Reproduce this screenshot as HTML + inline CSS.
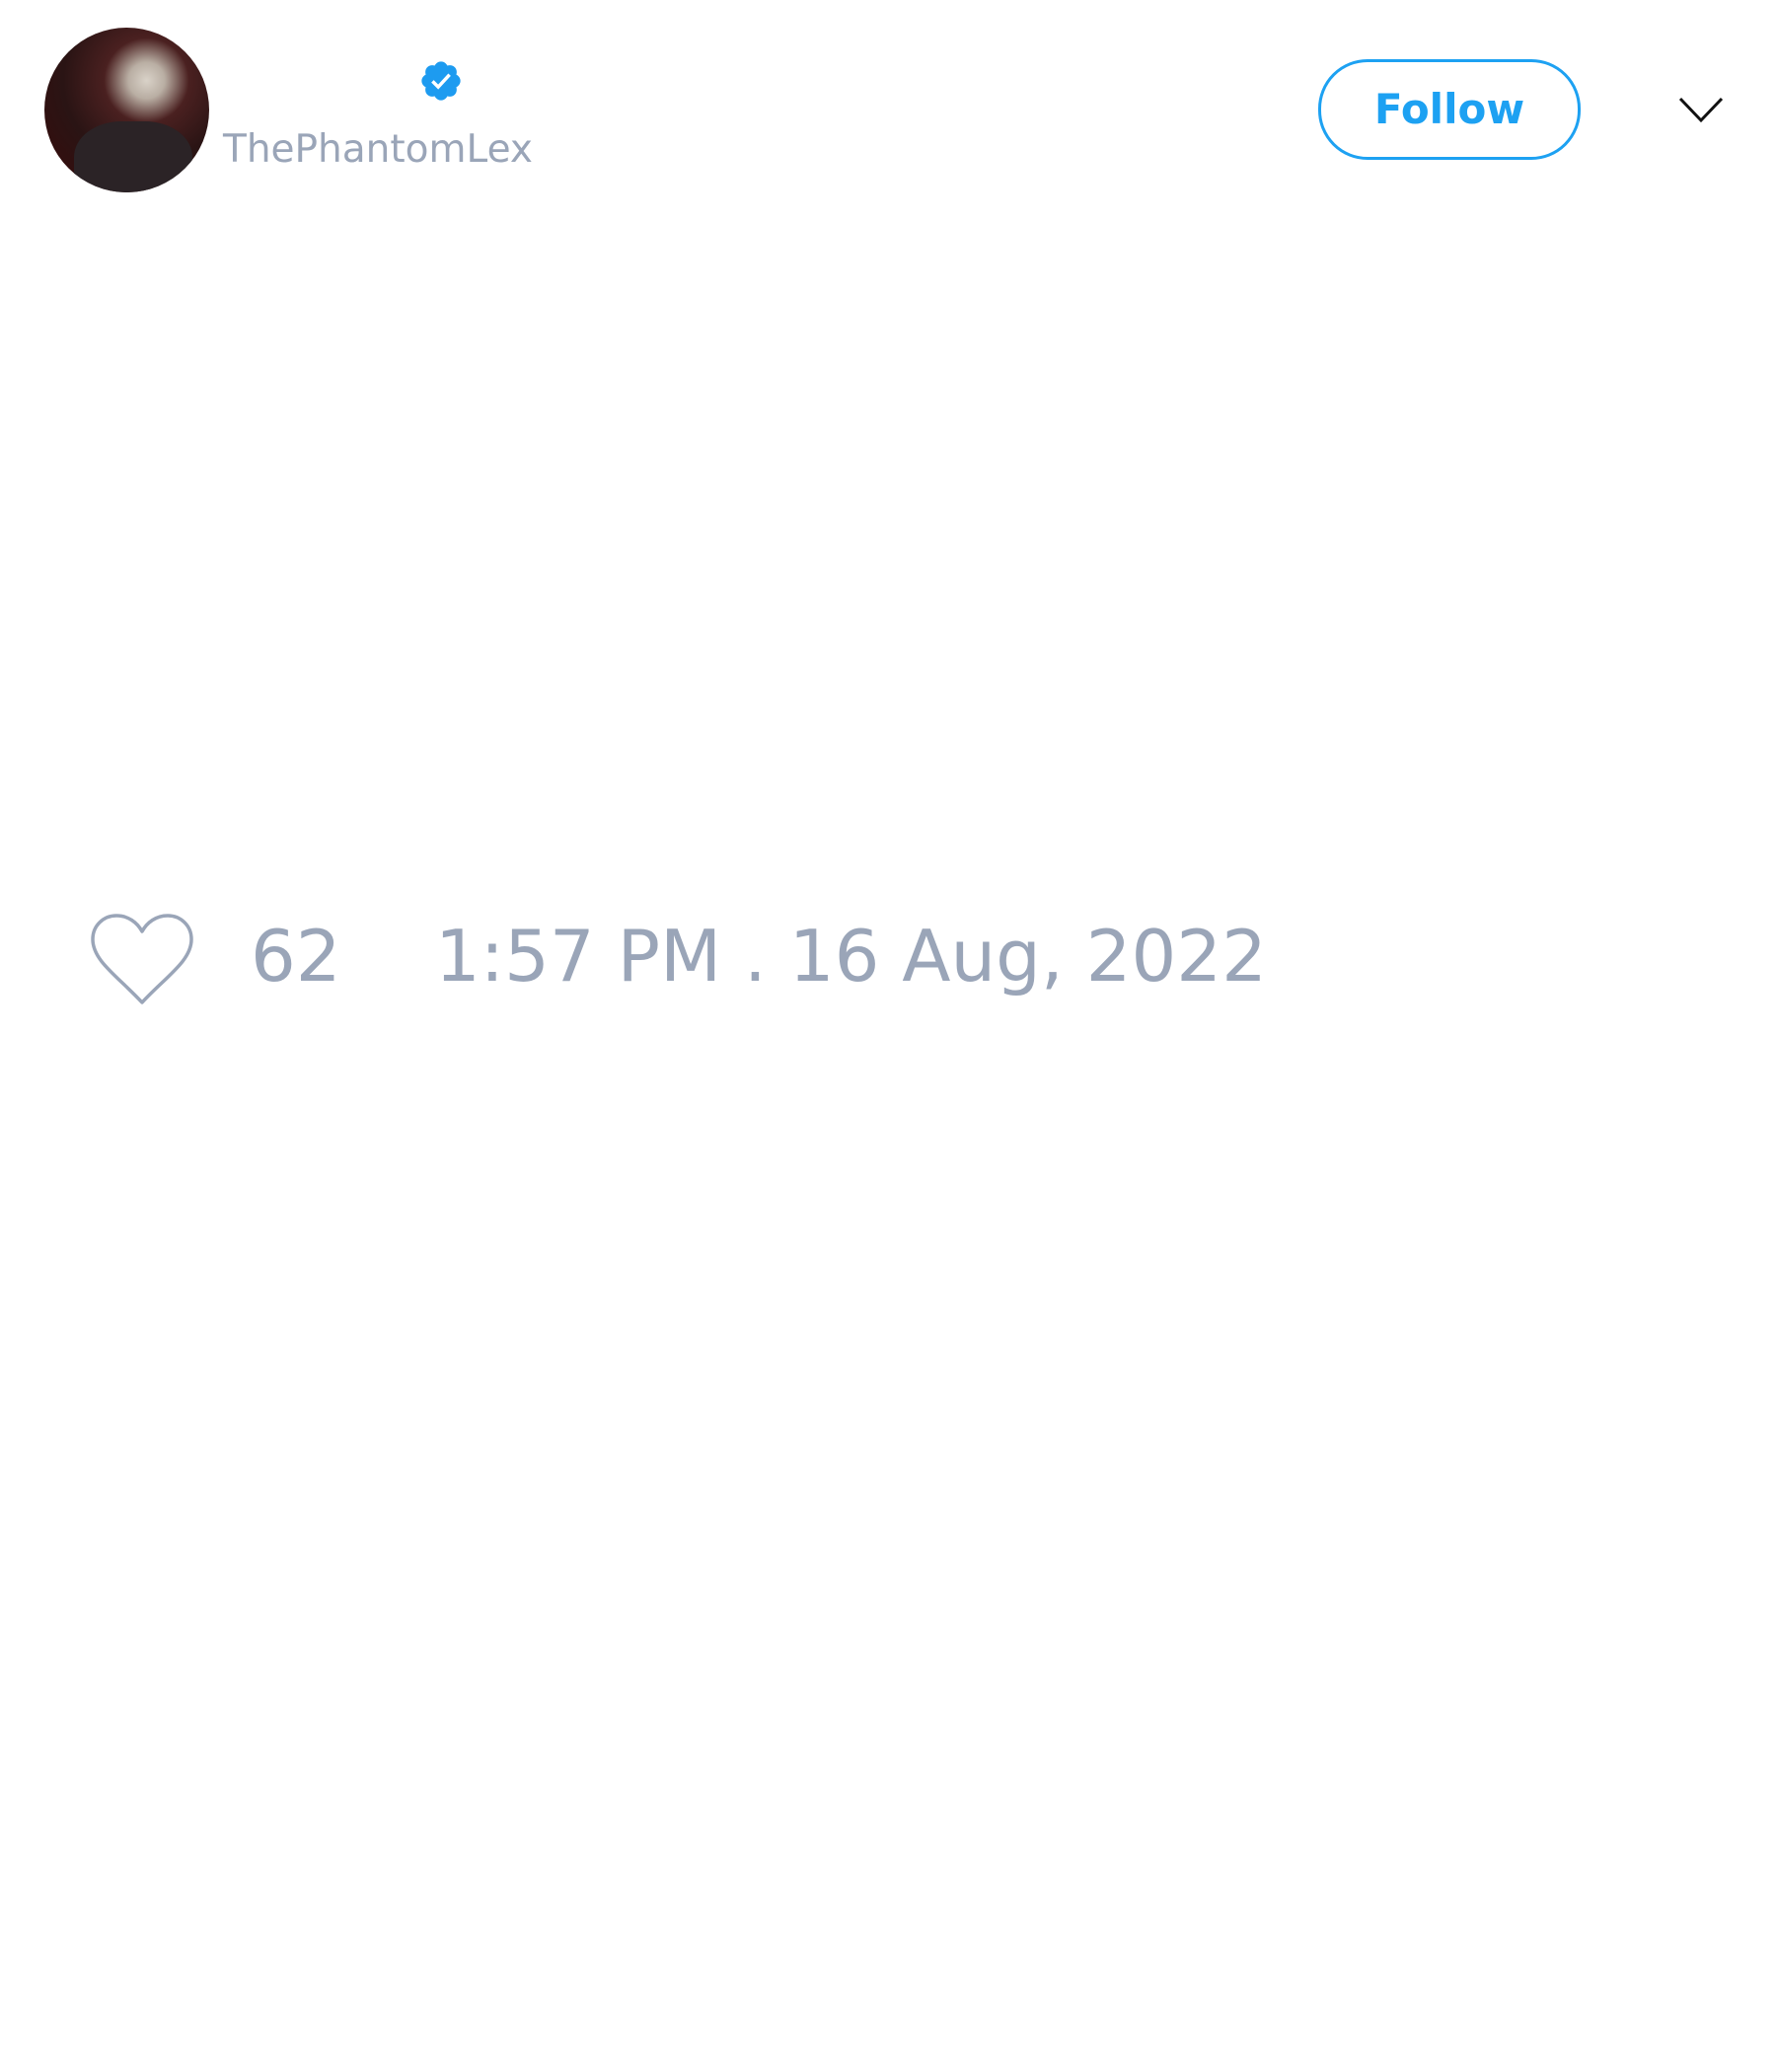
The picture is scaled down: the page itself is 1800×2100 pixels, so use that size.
<!DOCTYPE html>
<html><head><meta charset="utf-8"><style>
html,body{margin:0;padding:0;background:#fff;width:1800px;height:2100px;overflow:hidden;font-family:"DejaVu Sans","Liberation Sans",sans-serif}
.abs{position:absolute}
</style></head><body>
<div class="abs" style="left:45px;top:28px;width:167px;height:167px;border-radius:50%;background:radial-gradient(circle at 62% 32%,#d9d2c8 0,#b9aea3 12%,#4a2020 28%,#2a1414 55%,#3a0a0a 100%);overflow:hidden">
<div class="abs" style="left:30px;top:95px;width:120px;height:90px;border-radius:40%;background:#2b2326"></div>
</div>
<svg class="abs" style="left:424px;top:59px" width="46" height="46" viewBox="0 0 24 24"><path fill="#1d9bf0" d="M22.25 12c0-1.430-.88-2.670-2.190-3.340.46-1.390.2-2.900-.81-3.910s-2.520-1.270-3.910-.81c-.66-1.310-1.910-2.190-3.340-2.190s-2.670.88-3.330 2.190c-1.400-.46-2.910-.2-3.920.81s-1.260 2.520-.8 3.910C2.630 9.330 1.750 10.570 1.750 12s.88 2.670 2.190 3.340c-.46 1.390-.21 2.900.8 3.910s2.520 1.260 3.910.81c.67 1.310 1.910 2.190 3.340 2.190s2.680-.88 3.340-2.190c1.390.45 2.900.2 3.910-.81s1.270-2.520.81-3.910c1.310-.67 2.190-1.910 2.190-3.340z"/><path d="M7.5 12.2l3 3 6-6.5" stroke="#fff" stroke-width="1.8" fill="none"/></svg>
<div class="abs" style="left:226px;top:128px;font-size:39px;color:#9aa5b8;line-height:48px">ThePhantomLex</div>
<div class="abs" style="left:1344px;top:60px;width:260px;height:96px;border:3px solid #1da1f2;border-radius:50px;color:#1da1f2;font-weight:bold;font-size:42px;line-height:96px;text-align:center;margin-left:-8px">Follow</div>
<svg class="abs" style="left:1700px;top:96px" width="48" height="30" viewBox="0 0 48 30"><path d="M3 4L24 26L45 4" stroke="#111" stroke-width="3" fill="none"/></svg>
<svg class="abs" style="left:90px;top:924px" width="108" height="96" viewBox="0 0 108 96"><path d="M54 92C30 66 4 50 4 28C4 14 15 4 28 4C40 4 49 11 54 20C59 11 68 4 80 4C93 4 104 14 104 28C104 50 78 66 54 92Z" stroke="#9aa5b8" stroke-width="3.5" fill="none" stroke-linejoin="round"/></svg>
<div class="abs" style="left:254px;top:925px;font-size:72px;color:#9aa5b8;line-height:88px">62</div>
<div class="abs" style="left:441px;top:925px;font-size:72px;color:#9aa5b8;line-height:88px;white-space:nowrap">1:57 PM . 16 Aug, 2022</div>
</body></html>
